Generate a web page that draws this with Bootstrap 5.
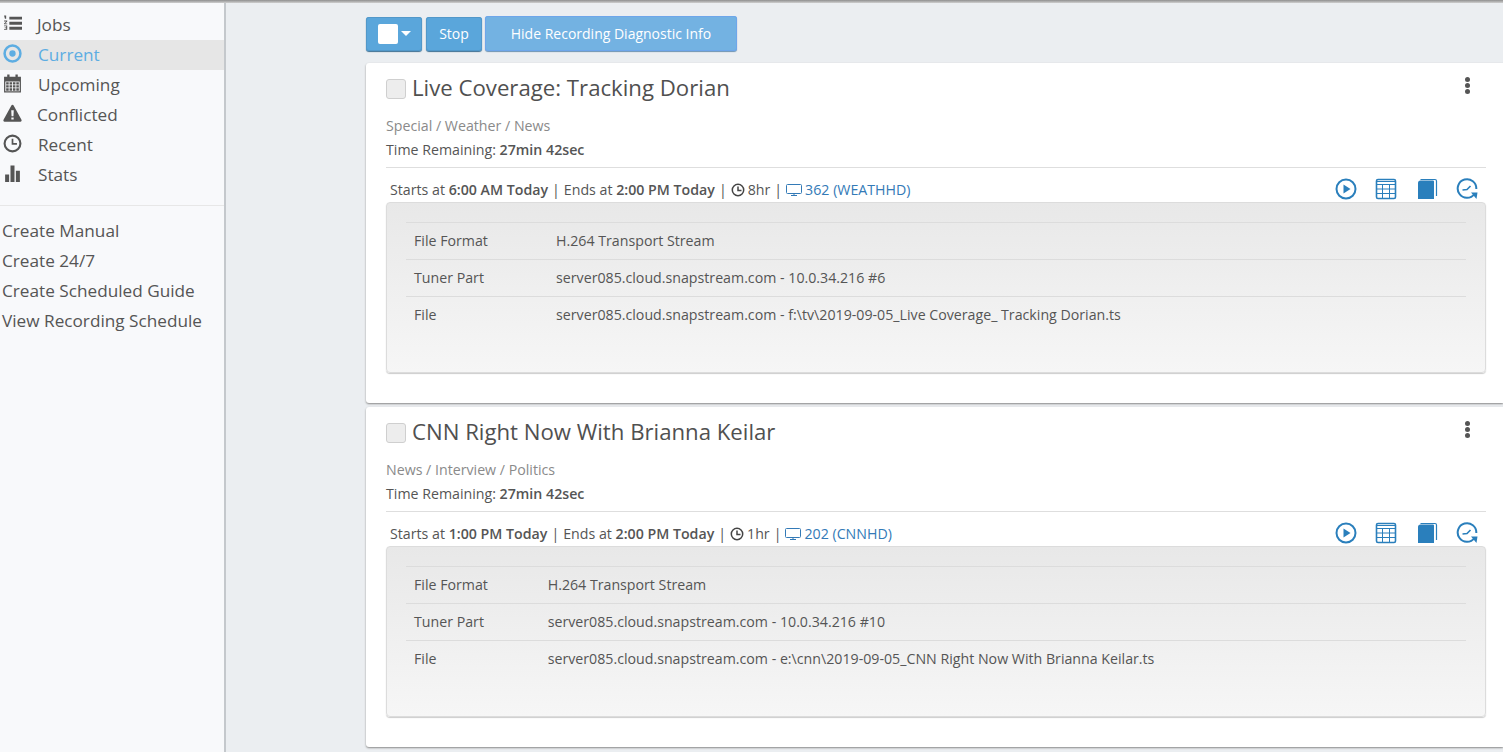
<!DOCTYPE html>
<html lang="en">
<head>
<meta charset="utf-8">
<title>Current Recordings</title>
<link href="https://cdn.jsdelivr.net/npm/bootstrap@5.3.0/dist/css/bootstrap.min.css" rel="stylesheet">
<style>
html,body{height:752px;overflow:hidden}
body{font-family:"Open Sans",sans-serif;font-size:14.2px;color:#555;background:#ebeef1;line-height:20px}
.topshade{height:3px;background:linear-gradient(#8f8f8f,#cfcfcf)}
.shell{height:749px}
.sidebar{width:226px;flex:none;background:#f8f9fb;border-right:2px solid #c4c8cc;padding-top:7px}
.side-item{height:30px;display:flex;align-items:center;font-size:17.2px;color:#555;padding-left:3px;text-decoration:none}
.side-item svg{width:19px;height:19px;flex:none;margin-right:16px;margin-top:-3px;fill:#555}
.side-item.on{background:#e6e6e6;color:#5dade2}
.side-item.on svg{fill:#5dade2}
.side-sep{border-top:1px solid #e7e7e7;margin:15px 0 10px}
.side-link{height:30px;display:flex;align-items:center;font-size:17.2px;color:#555;padding-left:2px;text-decoration:none}
.mainarea{padding:12px 0 0 140px;min-width:0}
.btnbar{height:37px;margin-bottom:11px;gap:4px;align-items:center}
.actbtn{background:#5aa6db;color:#fff;border:0;border-radius:3px;box-shadow:0 1px 1px #3d6f93,0 0 0 1px #5298c9 inset;font-size:14px;height:34px;display:flex;align-items:center;justify-content:center;padding:0}
.actbtn.w1{width:56px}
.actbtn.w2{width:56px}
.actbtn.w3{width:252px;height:35px;margin-left:-1px;background:#73b2e2;box-shadow:0 0 0 1px #6ea6ea inset,0 1px 1px #6d93b3}
.whitebox{width:20px;height:20px;background:#fff;border-radius:2px;margin-right:1px;margin-left:1px}
.caretdown{width:0;height:0;border-left:5px solid transparent;border-right:5px solid transparent;border-top:5px solid #fff;margin-left:2px}
.reccard{background:#fff;height:340px;margin-bottom:4px;padding:0 17px 0 20px;border-radius:3px 0 0 3px;box-shadow:0 1px 2px #8a8a8a;position:relative}
.titlerow{height:50px;padding-top:9px;align-items:flex-start}
.cbx{width:20px;height:20px;border:1px solid #cfcfcf;background:#ededed;border-radius:3px;margin:7px 6px 0 0;flex:none}
.rectitle{font-size:22.2px;line-height:32px;color:#505050;margin:0;font-weight:400}
.dots{position:absolute;top:14px;right:32px;width:6px}
.dots i{display:block;width:5px;height:5px;border-radius:50%;background:#555;margin-bottom:1px}
.cats{color:#8a8a8a;height:20px;line-height:26px}
.remain{margin-top:4px;height:20px;line-height:26px;color:#555}
.remain b,.infoline b{font-weight:600}
.sep{border-top:1px solid #dedede;margin-top:10px}
.infoline{height:34px;padding:9px 0 0 4px;position:relative;line-height:20px;display:flex;align-items:center}
.infoline .mini{width:14px;height:14px;margin:0 3px 0 0}
.chan{color:#337ab7}
.infoline span.pipe{margin:0 4px}
.acts{position:absolute;right:0;top:10px;display:flex;gap:18.500px;margin-right:8px}
.acts svg{width:22px;height:22px;display:block}
.diag{height:171px;border:1px solid #dcdcdc;border-radius:4px;background:linear-gradient(#e8e8e8,#f6f6f6);padding:19px 19px 0;box-shadow:0 1px 1px #ccc}
.diag table{width:100%;border-collapse:collapse}
.diag td{border-top:1px solid #dcdcdc;padding:8px;height:37px;line-height:20px;color:#555}
</style>
</head>
<body>
<div class="topshade"></div>
<div class="shell d-flex">
  <nav class="sidebar">
    <a class="side-item" href="#"><svg viewBox="0 0 18 18"><path d="M6 2.500h12v2.800H6zM6 7.300h12v2.800H6zM6 12.100h12v2.800H6z"/><path d="M1 1.500h2v3H1.800zM1 6.200h3v.8L2 9h2v.8H1V9l2-2H1zM1 11h3v4H1v-.7h2v-.9H1.600v-.7H3V11.700H1z"/></svg><span style="margin-left:-1px">Jobs</span></a>
    <a class="side-item on" href="#"><svg viewBox="0 0 18 18"><path fill-rule="evenodd" d="M9 .3a8.700 8.700 0 1 0 0 17.400A8.700 8.700 0 0 0 9 .3zm0 2.400a6.300 6.300 0 1 1 0 12.600A6.300 6.300 0 0 1 9 2.700z"/><circle cx="9" cy="9" r="3"/></svg>Current</a>
    <a class="side-item" href="#"><svg viewBox="0 0 18 18"><path fill-rule="evenodd" d="M1 2.500h3V.5h2.200v2h5.600v-2H14v2h3V17.500H1zM2.200 7v9.300h13.600V7z"/><path d="M3 7.800h2.400v2.200H3zM6.200 7.800h2.400v2.200H6.200zM9.400 7.800h2.400v2.200H9.400zM12.600 7.800H15v2.200h-2.400zM3 10.700h2.400v2.200H3zM6.200 10.700h2.400v2.200H6.200zM9.400 10.700h2.400v2.200H9.400zM12.600 10.700H15v2.200h-2.400zM3 13.600h2.400v2.200H3zM6.200 13.600h2.400v2.200H6.200zM9.400 13.600h2.400v2.200H9.400zM12.600 13.600H15v2.200h-2.400z"/></svg>Upcoming</a>
    <a class="side-item" href="#"><svg viewBox="0 0 18 18"><path fill-rule="evenodd" d="M9 .8c.5 0 .9.300 1.200.800l7.300 13.400c.4.800 0 1.700-1 1.700h-15c-1 0-1.400-.9-1-1.700L7.800 1.600C8.100 1.100 8.500.8 9 .8zM7.800 6l.3 5.500h1.800l.3-5.500zM7.900 12.700v2h2.200v-2z"/></svg><span style="margin-left:-1px">Conflicted</span></a>
    <a class="side-item" href="#"><svg viewBox="0 0 18 18"><path fill-rule="evenodd" d="M9 .5a8.500 8.500 0 1 0 0 17A8.500 8.500 0 0 0 9 .5zm0 2a6.500 6.500 0 1 1 0 13A6.500 6.500 0 0 1 9 2.500z"/><path d="M8.200 4.500h1.600V8.500h3.400v1.700H8.200z"/></svg>Recent</a>
    <a class="side-item" href="#"><svg viewBox="0 0 18 18"><path d="M2 10h3.800v7H2zM7.100 1.500h3.800V17H7.100zM12.200 6.500H16V17h-3.800z"/></svg>Stats</a>
    <div class="side-sep"></div>
    <a class="side-link" href="#">Create Manual</a>
    <a class="side-link" href="#">Create 24/7</a>
    <a class="side-link" href="#">Create Scheduled Guide</a>
    <a class="side-link" href="#">View Recording Schedule</a>
  </nav>
  <main class="mainarea flex-grow-1">
    <div class="d-flex btnbar">
      <button class="actbtn w1" type="button"><span class="whitebox"></span><span class="caretdown"></span></button>
      <button class="actbtn w2" type="button">Stop</button>
      <button class="actbtn w3" type="button">Hide Recording Diagnostic Info</button>
    </div>

    <section class="reccard">
      <div class="d-flex titlerow"><span class="cbx"></span><h2 class="rectitle">Live Coverage: Tracking Dorian</h2></div>
      <div class="dots"><i></i><i></i><i></i></div>
      <div class="cats">Special / Weather / News</div>
      <div class="remain">Time Remaining: <b>27min 42sec</b></div>
      <div class="sep"></div>
      <div class="infoline">
        <span>Starts at <b>6:00 AM Today</b></span><span class="pipe">|</span><span>Ends at <b>2:00 PM Today</b></span><span class="pipe">|</span>
        <svg class="mini" viewBox="0 0 14 14" fill="none" stroke="#444" stroke-width="1.500"><circle cx="7" cy="7" r="5.700"/><path d="M7 3.500V7.500H10.500"/></svg><span>8hr</span><span class="pipe">|</span>
        <svg class="mini" style="width:16px" viewBox="0 0 16 14" fill="none" stroke="#337ab7"><rect x=".5" y="1.500" width="15" height="9" rx="1"/><path d="M8 10.500v2M5 12.500h6"/></svg><span class="chan">362 (WEATHHD)</span>
        <div class="acts">
          <svg viewBox="0 0 22 22"><circle cx="11" cy="11" r="9.500" fill="none" stroke="#2a7fbc" stroke-width="2"/><path d="M8.500 6.500l7 4.500-7 4.500z" fill="#2a7fbc"/></svg>
          <svg viewBox="0 0 22 22"><rect x="1.500" y="1.500" width="19" height="19" rx="1.500" fill="none" stroke="#2a7fbc" stroke-width="1.600"/><path d="M1 6.500h20M1 11h20M1 15.500h20M7.500 6v14M14.500 6v14" stroke="#2a7fbc" stroke-width="1" fill="none"/><path d="M1.500 3.500h19" stroke="#2a7fbc" stroke-width="1" fill="none"/></svg>
          <svg viewBox="0 0 22 22"><path d="M4.500 1.500H19a1.500 1.500 0 0 1 1.500 1.500v15" fill="none" stroke="#2a7fbc" stroke-width="1.200"/><path d="M2 5a2.500 2.500 0 0 1 2.500-2.500H17A1 1 0 0 1 18 3.500V21H2z" fill="#2a7fbc"/></svg>
          <svg viewBox="0 0 22 22"><path d="M18.500 16A9.300 9.300 0 1 1 20.300 11" fill="none" stroke="#2a7fbc" stroke-width="2"/><path d="M15 14.500h6.500l-1 6.500z" fill="#2a7fbc"/><path d="M6.500 12l4.500-.5 3.500-3.500" fill="none" stroke="#2a7fbc" stroke-width="1.600"/></svg>
        </div>
      </div>
      <div class="diag">
        <table><tbody>
          <tr><td>File Format</td><td>H.264 Transport Stream</td></tr>
          <tr><td>Tuner Part</td><td>server085.cloud.snapstream.com - 10.0.34.216 #6</td></tr>
          <tr><td>File</td><td>server085.cloud.snapstream.com - f:\tv\2019-09-05_Live Coverage_ Tracking Dorian.ts</td></tr>
        </tbody></table>
      </div>
    </section>

    <section class="reccard">
      <div class="d-flex titlerow"><span class="cbx"></span><h2 class="rectitle">CNN Right Now With Brianna Keilar</h2></div>
      <div class="dots"><i></i><i></i><i></i></div>
      <div class="cats">News / Interview / Politics</div>
      <div class="remain">Time Remaining: <b>27min 42sec</b></div>
      <div class="sep"></div>
      <div class="infoline">
        <span>Starts at <b>1:00 PM Today</b></span><span class="pipe">|</span><span>Ends at <b>2:00 PM Today</b></span><span class="pipe">|</span>
        <svg class="mini" viewBox="0 0 14 14" fill="none" stroke="#444" stroke-width="1.500"><circle cx="7" cy="7" r="5.700"/><path d="M7 3.500V7.500H10.500"/></svg><span>1hr</span><span class="pipe">|</span>
        <svg class="mini" style="width:16px" viewBox="0 0 16 14" fill="none" stroke="#337ab7"><rect x=".5" y="1.500" width="15" height="9" rx="1"/><path d="M8 10.500v2M5 12.500h6"/></svg><span class="chan">202 (CNNHD)</span>
        <div class="acts">
          <svg viewBox="0 0 22 22"><circle cx="11" cy="11" r="9.500" fill="none" stroke="#2a7fbc" stroke-width="2"/><path d="M8.500 6.500l7 4.500-7 4.500z" fill="#2a7fbc"/></svg>
          <svg viewBox="0 0 22 22"><rect x="1.500" y="1.500" width="19" height="19" rx="1.500" fill="none" stroke="#2a7fbc" stroke-width="1.600"/><path d="M1 6.500h20M1 11h20M1 15.500h20M7.500 6v14M14.500 6v14" stroke="#2a7fbc" stroke-width="1" fill="none"/><path d="M1.500 3.500h19" stroke="#2a7fbc" stroke-width="1" fill="none"/></svg>
          <svg viewBox="0 0 22 22"><path d="M4.500 1.500H19a1.500 1.500 0 0 1 1.500 1.500v15" fill="none" stroke="#2a7fbc" stroke-width="1.200"/><path d="M2 5a2.500 2.500 0 0 1 2.500-2.500H17A1 1 0 0 1 18 3.500V21H2z" fill="#2a7fbc"/></svg>
          <svg viewBox="0 0 22 22"><path d="M18.500 16A9.300 9.300 0 1 1 20.300 11" fill="none" stroke="#2a7fbc" stroke-width="2"/><path d="M15 14.500h6.500l-1 6.500z" fill="#2a7fbc"/><path d="M6.500 12l4.500-.5 3.500-3.500" fill="none" stroke="#2a7fbc" stroke-width="1.600"/></svg>
        </div>
      </div>
      <div class="diag">
        <table><tbody>
          <tr><td>File Format</td><td>H.264 Transport Stream</td></tr>
          <tr><td>Tuner Part</td><td>server085.cloud.snapstream.com - 10.0.34.216 #10</td></tr>
          <tr><td>File</td><td>server085.cloud.snapstream.com - e:\cnn\2019-09-05_CNN Right Now With Brianna Keilar.ts</td></tr>
        </tbody></table>
      </div>
    </section>
  </main>
</div>
<script src="https://cdn.jsdelivr.net/npm/bootstrap@5.3.0/dist/js/bootstrap.bundle.min.js"></script>
</body>
</html>
